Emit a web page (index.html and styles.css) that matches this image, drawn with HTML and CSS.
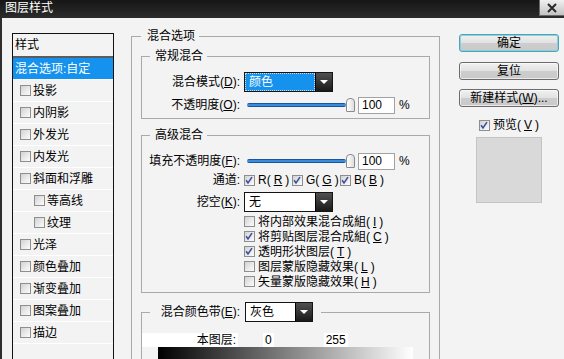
FILE: index.html
```html
<!DOCTYPE html>
<html lang="zh-CN">
<head>
<meta charset="utf-8">
<title>图层样式</title>
<link rel="stylesheet" href="styles.css">
</head>
<body>
<div class="window">
  <div class="titlebar">
    <span class="title">图层样式</span>
    <span class="close"><svg width="12" height="10" viewBox="0 0 12 10"><path d="M2 1 L10 9 M10 1 L2 9" stroke="#2a2a2a" stroke-width="2"/></svg></span>
  </div>
  <div class="body">
    <div class="styles-list">
      <div class="list-head">样式</div>
      <div class="item selected">混合选项:自定</div>
      <div class="item"><span class="cb"></span>投影</div>
      <div class="item"><span class="cb"></span>内阴影</div>
      <div class="item"><span class="cb"></span>外发光</div>
      <div class="item"><span class="cb"></span>内发光</div>
      <div class="item"><span class="cb"></span>斜面和浮雕</div>
      <div class="item sub"><span class="cb"></span>等高线</div>
      <div class="item sub"><span class="cb"></span>纹理</div>
      <div class="item"><span class="cb"></span>光泽</div>
      <div class="item"><span class="cb"></span>颜色叠加</div>
      <div class="item"><span class="cb"></span>渐变叠加</div>
      <div class="item"><span class="cb"></span>图案叠加</div>
      <div class="item"><span class="cb"></span>描边</div>
      <div class="item"></div>
    </div>

    <fieldset class="group outer">
      <legend>混合选项</legend>

      <fieldset class="group inner general">
        <legend>常规混合</legend>
        <div class="row">
          <span class="label">混合模式(<u>D</u>):</span>
          <div class="select focus">
            <span class="select-value"><span class="select-text">颜色</span></span>
            <span class="select-arrow"><span class="tri"></span></span>
          </div>
        </div>
        <div class="row gap3">
          <span class="label">不透明度(<u>O</u>):</span>
          <div class="slider"><span class="track"></span><span class="thumb"></span></div>
          <span class="num">100</span>
          <span class="pct">%</span>
        </div>
      </fieldset>

      <fieldset class="group inner advanced">
        <legend>高级混合</legend>
        <div class="row">
          <span class="label">填充不透明度(<u>F</u>):</span>
          <div class="slider"><span class="track"></span><span class="thumb"></span></div>
          <span class="num">100</span>
          <span class="pct">%</span>
        </div>
        <div class="row short">
          <span class="label">通道:</span>
          <span class="chan"><span class="cb on"><svg width="11" height="11" viewBox="0 0 11 11"><path d="M2.3 5.2 L4.4 8.2 L8.8 1.8" fill="none" stroke="#3a4c9e" stroke-width="1.7"/></svg></span>R(<u>R</u>)</span>
          <span class="chan"><span class="cb on"><svg width="11" height="11" viewBox="0 0 11 11"><path d="M2.3 5.2 L4.4 8.2 L8.8 1.8" fill="none" stroke="#3a4c9e" stroke-width="1.7"/></svg></span>G(<u>G</u>)</span>
          <span class="chan"><span class="cb on"><svg width="11" height="11" viewBox="0 0 11 11"><path d="M2.3 5.2 L4.4 8.2 L8.8 1.8" fill="none" stroke="#3a4c9e" stroke-width="1.7"/></svg></span>B(<u>B</u>)</span>
        </div>
        <div class="row gap3">
          <span class="label">挖空(<u>K</u>):</span>
          <div class="select">
            <span class="select-value"><span class="select-text">无</span></span>
            <span class="select-arrow"><span class="tri"></span></span>
          </div>
        </div>
        <div class="checks">
          <div class="check"><span class="cb"></span>将内部效果混合成組(<u>I</u>)</div>
          <div class="check"><span class="cb on"><svg width="11" height="11" viewBox="0 0 11 11"><path d="M2.3 5.2 L4.4 8.2 L8.8 1.8" fill="none" stroke="#3a4c9e" stroke-width="1.7"/></svg></span>将剪贴图层混合成組(<u>C</u>)</div>
          <div class="check"><span class="cb on"><svg width="11" height="11" viewBox="0 0 11 11"><path d="M2.3 5.2 L4.4 8.2 L8.8 1.8" fill="none" stroke="#3a4c9e" stroke-width="1.7"/></svg></span>透明形状图层(<u>T</u>)</div>
          <div class="check"><span class="cb"></span>图层蒙版隐藏效果(<u>L</u>)</div>
          <div class="check"><span class="cb"></span>矢量蒙版隐藏效果(<u>H</u>)</div>
        </div>
      </fieldset>

      <fieldset class="group inner band">
        <legend class="band-legend">
          <span class="band-label">混合颜色带(<u>E</u>):</span>
          <span class="select band-select">
            <span class="select-value"><span class="select-text">灰色</span></span>
            <span class="select-arrow"><span class="tri"></span></span>
          </span>
        </legend>
        <div class="layer-row">
          <span class="layer-label">本图层:</span>
          <span class="layer-min">0</span>
          <span class="layer-max">255</span>
        </div>
        <div class="gradient"></div>
      </fieldset>
    </fieldset>

    <div class="side">
      <div class="btn default">确定</div>
      <div class="btn btn-reset">复位</div>
      <div class="btn btn-new">新建样式(<u>W</u>)...</div>
      <div class="preview-check"><span class="cb on"><svg width="11" height="11" viewBox="0 0 11 11"><path d="M2.3 5.2 L4.4 8.2 L8.8 1.8" fill="none" stroke="#3a4c9e" stroke-width="1.7"/></svg></span>预览(<u>V</u>)</div>
      <div class="preview-box"></div>
    </div>
  </div>
</div>
</body>
</html>
```

FILE: styles.css
```css
* { box-sizing: border-box; }
html, body { margin: 0; padding: 0; }
body {
  width: 564px;
  height: 359px;
  overflow: hidden;
  background: #f3f3f3;
  font-family: "Liberation Sans", "Noto Sans CJK SC", sans-serif;
  font-size: 12px;
  line-height: 14px;
  color: #000;
}
u { text-decoration: underline; text-underline-offset: 1px; }

.window {
  width: 564px;
  height: 359px;
  display: flex;
  flex-direction: column;
  overflow: hidden;
  background: #f3f3f3;
}

.titlebar {
  height: 18px;
  flex: none;
  display: flex;
  justify-content: space-between;
  align-items: flex-start;
  background: linear-gradient(#161616, #2c2c2c);
  color: #fff;
}
.title { padding-left: 5px; line-height: 17px; font-size: 12px; }
.close {
  width: 25px;
  height: 16px;
  display: flex;
  align-items: center;
  justify-content: center;
  background: linear-gradient(#f0f0f0, #c4c4c4);
  border: 1px solid #6a6a6a;
  border-right: none;
  border-top: none;
}

.body {
  flex: 1;
  display: flex;
  align-items: flex-start;
  border-left: 2px solid #2e2e2e;
  padding-left: 10px;
  overflow: hidden;
}

/* styles list */
.styles-list {
  width: 102px;
  height: 360px;
  flex: none;
  margin-top: 15px;
  border: 1px solid #121212;
  background: #f3f3f3;
}
.list-head {
  height: 24px;
  line-height: 22px;
  padding-left: 2px;
  border-bottom: 2px solid #5c5c5c;
}
.item {
  height: 22px;
  display: flex;
  align-items: center;
  gap: 2px;
  padding-left: 7px;
  border-bottom: 1px solid #ffffff;
  white-space: nowrap;
}
.item.sub { padding-left: 21px; }
.item.selected {
  padding-left: 2px;
  background: #1592ee;
  color: #fff;
}

/* checkbox */
.cb {
  width: 11px;
  height: 11px;
  flex: none;
  display: inline-flex;
  border: 1px solid #8e8e8e;
  background: linear-gradient(135deg, #d2d2d2 0%, #ececec 60%, #fbfbfb 100%);
}
.cb svg { display: block; margin: -1px 0 0 -1px; }

/* group boxes */
.group {
  margin: 0;
  border: 1px solid #a9a9a9;
  min-width: 0;
}
.group > legend {
  line-height: 14px;
  padding: 0 4px 0 5px;
  margin-left: 8px;
}
.outer {
  width: 309px;
  height: 360px;
  flex: none;
  margin: 11px 0 0 17px;
  padding: 6px 9px 0 9px;
}
.outer > legend { margin-left: 0; padding: 0 4px 0 6px; }
.inner { padding: 0; }
.general { padding: 9px 0 3px 0; }
.advanced { margin-top: 9px; padding: 9px 0 3px 0; }
.band { margin-top: 9px; height: 80px; padding: 0; }

.row {
  height: 20px;
  display: flex;
  align-items: center;
}
.row.short { height: 18px; }
.row.gap3 { margin-top: 3px; }
.label {
  width: 98px;
  flex: none;
  text-align: right;
  white-space: nowrap;
  margin-right: 4px;
}

/* dropdown */
.select {
  width: 89px;
  height: 20px;
  flex: none;
  display: flex;
  border: 1px solid #141414;
  background: #141414;
}
.select-value {
  flex: 1;
  display: flex;
  align-items: center;
  background: #fff;
  padding-left: 4px;
}
.select.focus .select-value {
  background: #1592ee;
  color: #fff;
  border: 1px dotted #dcdcdc;
  padding-left: 3px;
}
.select-text { line-height: 14px; }
.select-arrow {
  width: 17px;
  flex: none;
  display: flex;
  align-items: center;
  justify-content: center;
  background: linear-gradient(#505050, #1a1a1a);
  border-left: 1px solid #000;
}
.tri {
  width: 0;
  height: 0;
  border-left: 4px solid transparent;
  border-right: 4px solid transparent;
  border-top: 4px solid #fff;
}

/* slider */
.slider {
  width: 108px;
  height: 14px;
  flex: none;
  display: flex;
  align-items: center;
  margin-left: 3px;
}
.track {
  flex: 1;
  height: 4px;
  border-radius: 2px;
  background: linear-gradient(#0c3a78, #49a8ff 50%, #0c3a78);
}
.thumb {
  width: 9px;
  height: 14px;
  flex: none;
  border: 1px solid #8a8a8a;
  border-radius: 4px 4px 1px 1px;
  background: linear-gradient(90deg, #ffffff, #dedede);
}
.num {
  width: 37px;
  height: 17px;
  flex: none;
  margin-left: 3px;
  padding-left: 3px;
  line-height: 15px;
  background: #fff;
  border: 1px solid #a2a2a2;
}
.pct { margin-left: 4px; }

/* channels */
.chan {
  width: 48px;
  flex: none;
  display: flex;
  align-items: center;
  gap: 3px;
  white-space: nowrap;
}

/* checkbox list */
.checks { margin-top: 2px; padding-left: 102px; }
.check {
  height: 15px;
  display: flex;
  align-items: center;
  gap: 3px;
  white-space: nowrap;
}

/* blend band */
.band-legend {
  display: flex;
  align-items: center;
  padding: 0 8px 0 0 !important;
  margin-left: 8px !important;
  line-height: 14px;
}
.band-label {
  width: 90px;
  text-align: right;
  margin-right: 5px;
  white-space: nowrap;
}
.band-select { width: 68px; }
.layer-row {
  display: flex;
  align-items: center;
  margin-top: 11px;
  height: 14px;
}
.layer-label {
  width: 96px;
  text-align: right;
  background: #fff;
  padding: 0 2px;
}
.layer-min { margin-left: 25px; background: #fff; padding: 0 2px; }
.layer-max { margin-left: 50px; background: #fff; padding: 0 2px; }
.gradient {
  width: 255px;
  height: 20px;
  margin-left: 16px;
  margin-top: 0;
  background: linear-gradient(90deg, #000, #fff);
}

/* side */
.side {
  width: 100px;
  flex: none;
  margin: 16px 0 0 19px;
  display: flex;
  flex-direction: column;
  align-items: center;
}
.btn {
  width: 100px;
  height: 18px;
  display: flex;
  align-items: center;
  justify-content: center;
  border: 1px solid #6c6c6c;
  border-radius: 3px;
  background: linear-gradient(#f1f1f1 0%, #e2e2e2 48%, #cdcdcd 52%, #c9c9c9 100%);
  box-shadow: inset 0 0 0 1px rgba(255,255,255,0.6);
  white-space: nowrap;
}
.btn.default {
  border: 1px solid #4fa3b6;
  box-shadow: inset 0 0 0 1px #8fd0de;
}
.btn-reset { margin-top: 10px; }
.btn-new { margin-top: 9px; }
.preview-check {
  margin-top: 10px;
  height: 16px;
  display: flex;
  align-items: center;
  gap: 3px;
  white-space: nowrap;
}
.preview-box {
  width: 66px;
  height: 66px;
  margin-top: 4px;
  background: #d9d9d9;
  border: 1px solid #c4c4c4;
}
```
